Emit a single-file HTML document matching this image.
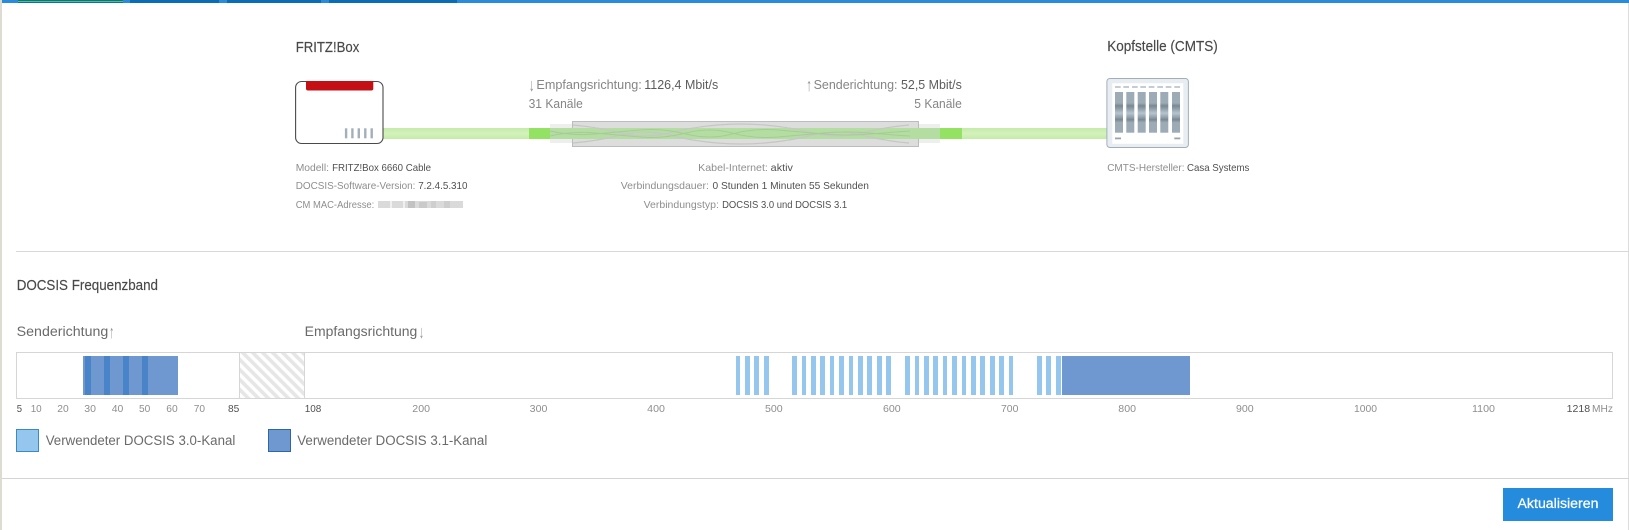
<!DOCTYPE html>
<html lang="de">
<head>
<meta charset="utf-8">
<title>DOCSIS</title>
<style>
html,body{margin:0;padding:0;background:#fff;width:1629px;height:530px;overflow:hidden}
svg{display:block;position:absolute;left:0;top:0;filter:blur(.25px)}
text{font-family:"Liberation Sans",sans-serif}
.s{font-size:10.5px;fill:#8e8e8e}
.v{font-size:10.5px;fill:#505050}
.m{font-size:13px;fill:#858585}
.n{font-size:13px;fill:#5c5c5c}
.a{font-size:18px;fill:#909090}
.t{font-size:14.5px;fill:#484848;stroke:#484848;stroke-width:.15px}
.h{font-size:13.5px;fill:#6a6a6a}
.l{font-size:10.5px;fill:#8e8e8e}
.d{font-size:10.5px;fill:#505050}
</style>
</head>
<body>
<svg width="1629" height="530" viewBox="0 0 1629 530" xmlns="http://www.w3.org/2000/svg">
<defs>
<pattern id="hatch" width="7.07" height="7.07" patternUnits="userSpaceOnUse" patternTransform="rotate(-45 240 353)">
<rect width="3.6" height="7.07" fill="#e6e6e6"/>
</pattern>
<linearGradient id="slot" x1="0" y1="0" x2="0" y2="1">
<stop offset="0" stop-color="#9dabb6"/>
<stop offset=".27" stop-color="#9dabb6"/>
<stop offset=".34" stop-color="#7a8892"/>
<stop offset=".42" stop-color="#94a2ad"/>
<stop offset=".52" stop-color="#b4c4d0"/>
<stop offset=".62" stop-color="#94a2ad"/>
<stop offset=".68" stop-color="#7a8892"/>
<stop offset=".75" stop-color="#9dabb6"/>
<stop offset="1" stop-color="#9dabb6"/>
</linearGradient>
<linearGradient id="cab" x1="0" y1="0" x2="0" y2="1">
<stop offset="0" stop-color="#c4eba8"/>
<stop offset=".5" stop-color="#d4f2bc"/>
<stop offset="1" stop-color="#c4eba8"/>
</linearGradient>
</defs>

<!-- frame -->
<rect x="0" y="0" width="2" height="530" fill="#dcdcd2"/>
<rect x="1628" y="3" width="1" height="527" fill="#dcdcdc"/>

<!-- top bar -->
<rect x="0" y="0" width="1629" height="3" fill="#2a8bdc"/>
<rect x="0" y="0" width="2" height="3" fill="#dcdcd2"/>
<rect x="18" y="0" width="105" height="3" fill="#0a6cb5"/>
<rect x="18" y="1" width="105" height="1" fill="#58c858"/>
<rect x="130" y="0" width="89" height="3" fill="#0a6cb5"/>
<rect x="227" y="0" width="94" height="3" fill="#0a6cb5"/>
<rect x="329" y="0" width="128" height="3" fill="#0a6cb5"/>

<!-- titles -->
<text class="t" x="295.7" y="52" textLength="63.6" lengthAdjust="spacingAndGlyphs">FRITZ!Box</text>
<text class="t" x="1107.2" y="51" textLength="110.6" lengthAdjust="spacingAndGlyphs">Kopfstelle (CMTS)</text>

<!-- cable -->
<rect x="383" y="128" width="724" height="11" fill="url(#cab)"/>
<rect x="529" y="128" width="21" height="11" fill="#94e264"/>
<rect x="940" y="128" width="22" height="11" fill="#94e264"/>
<rect x="550" y="124" width="390" height="19" fill="#eeeeee"/>
<rect x="572.5" y="121.5" width="346" height="25" fill="#dddddd" stroke="#bcbcbc" stroke-width="1"/>
<rect x="550" y="128" width="390" height="11" fill="#b4dda2"/>
<path d="M573 125q24 2 48 8t48 0 48-8 48 0 48 8 48 0 48-8" fill="none" stroke="#c6c6c6" stroke-width="1.2"/>
<path d="M573 143q24-2 48-8t48 0 48 8 48 0 48-8 48 0 48 8" fill="none" stroke="#c6c6c6" stroke-width="1.2"/>
<path d="M550 131q22 5 45 3t45-4 46 4 46 0 46-4 46 4 46 0 40-3" fill="none" stroke="#a6cc96" stroke-width="1"/>
<path d="M550 136q22-5 45-3t45 4 46-4 46 0 46 4 46-4 46 0 40 3" fill="none" stroke="#a6cc96" stroke-width="1"/>

<!-- router -->
<rect x="295.6" y="81.5" width="87.4" height="62" rx="6" ry="6" fill="#fff" stroke="#4a4a4a" stroke-width="1.1"/>
<path d="M306 81h67.3v7.5q0 2-2 2H308q-2 0-2-2z" fill="#c40f14"/>
<g fill="#a4afba">
<rect x="344.9" y="128.3" width="2.4" height="10"/>
<rect x="351.2" y="128.3" width="2.4" height="10"/>
<rect x="357.6" y="128.3" width="2.4" height="10"/>
<rect x="364.1" y="128.3" width="2.4" height="10"/>
<rect x="370.5" y="128.3" width="2.4" height="10"/>
</g>

<!-- CMTS -->
<rect x="1106.9" y="78.5" width="81.5" height="69" rx="3" fill="#e8edf2" stroke="#a3aebb" stroke-width="1"/>
<rect x="1112.3" y="83.3" width="71" height="60.5" fill="#fff"/>
<g fill="url(#slot)">
<rect x="1115" y="92" width="8" height="40.7"/>
<rect x="1126.3" y="92" width="8" height="40.7"/>
<rect x="1137.7" y="92" width="8" height="40.7"/>
<rect x="1149" y="92" width="8" height="40.7"/>
<rect x="1160.3" y="92" width="8" height="40.7"/>
<rect x="1172" y="92" width="8" height="40.7"/>
</g>
<g fill="#c4ccd4">
<rect x="1115" y="86" width="5.7" height="2"/>
<rect x="1123.3" y="86" width="5.7" height="2"/>
<rect x="1132" y="86" width="5.7" height="2"/>
<rect x="1140.3" y="86" width="5.7" height="2"/>
<rect x="1148.7" y="86" width="5.7" height="2"/>
<rect x="1157.3" y="86" width="5.7" height="2"/>
<rect x="1165.7" y="86" width="5.7" height="2"/>
<rect x="1174.3" y="86" width="5.7" height="2"/>
</g>
<rect x="1115" y="137.5" width="6" height="1.8" fill="#98a4ae"/>
<rect x="1174.3" y="137.5" width="6" height="1.8" fill="#98a4ae"/>

<!-- rates -->
<text class="a" x="529" y="91" textLength="5.5" lengthAdjust="spacingAndGlyphs">↓</text>
<text class="m" x="536.4" y="89" textLength="105.4" lengthAdjust="spacingAndGlyphs">Empfangsrichtung:</text>
<text class="n" x="644.3" y="89" textLength="73.9" lengthAdjust="spacingAndGlyphs">1126,4 Mbit/s</text>
<text class="m" x="528.6" y="108" textLength="54.3" lengthAdjust="spacingAndGlyphs">31 Kanäle</text>
<text class="a" x="806.4" y="91" textLength="5.5" lengthAdjust="spacingAndGlyphs">↑</text>
<text class="m" x="813.6" y="89" textLength="83.9" lengthAdjust="spacingAndGlyphs">Senderichtung:</text>
<text class="n" x="901" y="89" textLength="60.8" lengthAdjust="spacingAndGlyphs">52,5 Mbit/s</text>
<text class="m" x="914.3" y="108" textLength="47.5" lengthAdjust="spacingAndGlyphs">5 Kanäle</text>

<!-- info left -->
<text class="s" x="295.7" y="171" textLength="33.3" lengthAdjust="spacingAndGlyphs">Modell:</text>
<text class="v" x="332.1" y="171" textLength="98.9" lengthAdjust="spacingAndGlyphs">FRITZ!Box 6660 Cable</text>
<text class="s" x="295.7" y="189" textLength="119.7" lengthAdjust="spacingAndGlyphs">DOCSIS-Software-Version:</text>
<text class="v" x="418.2" y="189" textLength="49.3" lengthAdjust="spacingAndGlyphs">7.2.4.5.310</text>
<text class="s" x="295.7" y="208" textLength="78.6" lengthAdjust="spacingAndGlyphs">CM MAC-Adresse:</text>
<g>
<rect x="378" y="201" width="85" height="7" fill="#dadada"/>
<rect x="390" y="201" width="2" height="7" fill="#fff" opacity=".6"/>
<rect x="403" y="201" width="2" height="7" fill="#fff" opacity=".6"/>
<rect x="408" y="201" width="7" height="7" fill="#c2c2c2"/>
<rect x="419" y="202" width="8" height="6" fill="#cacaca"/>
<rect x="431" y="201" width="5" height="7" fill="#cecece"/>
<rect x="444" y="201" width="6" height="7" fill="#cecece"/>
</g>

<!-- info center -->
<text class="s" x="698.2" y="171" textLength="69.7" lengthAdjust="spacingAndGlyphs">Kabel-Internet:</text>
<text class="v" x="770.7" y="171" textLength="22.2" lengthAdjust="spacingAndGlyphs">aktiv</text>
<text class="s" x="620.7" y="189" textLength="88.2" lengthAdjust="spacingAndGlyphs">Verbindungsdauer:</text>
<text class="v" x="712.5" y="189" textLength="156.4" lengthAdjust="spacingAndGlyphs">0 Stunden 1 Minuten 55 Sekunden</text>
<text class="s" x="643.6" y="208" textLength="75.3" lengthAdjust="spacingAndGlyphs">Verbindungstyp:</text>
<text class="v" x="722.1" y="208" textLength="125" lengthAdjust="spacingAndGlyphs">DOCSIS 3.0 und DOCSIS 3.1</text>

<!-- info right -->
<text class="s" x="1107.2" y="171" textLength="77.3" lengthAdjust="spacingAndGlyphs">CMTS-Hersteller:</text>
<text class="v" x="1187" y="171" textLength="62.4" lengthAdjust="spacingAndGlyphs">Casa Systems</text>

<!-- divider -->
<rect x="16" y="251" width="1613" height="1" fill="#d8d8d8"/>

<!-- band section -->
<text class="t" x="16.7" y="290" textLength="141.3" lengthAdjust="spacingAndGlyphs">DOCSIS Frequenzband</text>
<text class="h" x="16.7" y="336" textLength="91.6" lengthAdjust="spacingAndGlyphs">Senderichtung</text>
<text class="a" x="109.3" y="338" textLength="5" lengthAdjust="spacingAndGlyphs">↑</text>
<text class="h" x="304.7" y="336" textLength="112.6" lengthAdjust="spacingAndGlyphs">Empfangsrichtung</text>
<text class="a" x="419" y="338" textLength="5" lengthAdjust="spacingAndGlyphs">↓</text>

<!-- chart -->
<rect x="240" y="353" width="64" height="45" fill="url(#hatch)"/>
<rect x="16.5" y="352.5" width="1596" height="46" fill="none" stroke="#d6d6d6" stroke-width="1"/>
<rect x="239" y="352" width="1" height="47" fill="#d6d6d6"/>
<rect x="304" y="352" width="1" height="47" fill="#d6d6d6"/>

<!-- upstream -->
<rect x="83" y="356" width="95" height="39" fill="#6e98cf"/>
<g fill="#4a84c8">
<rect x="85" y="356" width="6" height="39"/>
<rect x="104" y="356" width="6" height="39"/>
<rect x="123" y="356" width="6" height="39"/>
<rect x="142" y="356" width="6" height="39"/>
</g>

<!-- downstream -->
<g fill="#95c6ee">
<rect x="736" y="356" width="4" height="39"/>
<rect x="745" y="356" width="5" height="39"/>
<rect x="754" y="356" width="5" height="39"/>
<rect x="764" y="356" width="5" height="39"/>
<rect x="792" y="356" width="5" height="39"/>
<rect x="802" y="356" width="4" height="39"/>
<rect x="811" y="356" width="5" height="39"/>
<rect x="820" y="356" width="5" height="39"/>
<rect x="830" y="356" width="4" height="39"/>
<rect x="839" y="356" width="5" height="39"/>
<rect x="849" y="356" width="4" height="39"/>
<rect x="858" y="356" width="5" height="39"/>
<rect x="867" y="356" width="5" height="39"/>
<rect x="877" y="356" width="5" height="39"/>
<rect x="886" y="356" width="5" height="39"/>
<rect x="905" y="356" width="5" height="39"/>
<rect x="915" y="356" width="4" height="39"/>
<rect x="924" y="356" width="5" height="39"/>
<rect x="933" y="356" width="5" height="39"/>
<rect x="943" y="356" width="4" height="39"/>
<rect x="952" y="356" width="5" height="39"/>
<rect x="962" y="356" width="4" height="39"/>
<rect x="971" y="356" width="5" height="39"/>
<rect x="980" y="356" width="5" height="39"/>
<rect x="990" y="356" width="5" height="39"/>
<rect x="999" y="356" width="5" height="39"/>
<rect x="1009" y="356" width="4" height="39"/>
<rect x="1037" y="356" width="5" height="39"/>
<rect x="1046" y="356" width="5" height="39"/>
<rect x="1056" y="356" width="5" height="39"/>
</g>
<rect x="1062" y="356" width="128" height="39" fill="#6e98cf"/>

<!-- axis -->
<text class="d" x="16.7" y="412" textLength="5.3" lengthAdjust="spacingAndGlyphs">5</text>
<text class="l" x="30.7" y="412" textLength="11" lengthAdjust="spacingAndGlyphs">10</text>
<text class="l" x="57.3" y="412" textLength="11.4" lengthAdjust="spacingAndGlyphs">20</text>
<text class="l" x="84.3" y="412" textLength="11.7" lengthAdjust="spacingAndGlyphs">30</text>
<text class="l" x="111.7" y="412" textLength="11.6" lengthAdjust="spacingAndGlyphs">40</text>
<text class="l" x="139" y="412" textLength="11.3" lengthAdjust="spacingAndGlyphs">50</text>
<text class="l" x="166.3" y="412" textLength="11.4" lengthAdjust="spacingAndGlyphs">60</text>
<text class="l" x="193.7" y="412" textLength="11.3" lengthAdjust="spacingAndGlyphs">70</text>
<text class="d" x="228" y="412" textLength="11.3" lengthAdjust="spacingAndGlyphs">85</text>
<text class="d" x="304.7" y="412" textLength="16.6" lengthAdjust="spacingAndGlyphs">108</text>
<text class="l" x="412.3" y="412" textLength="17.7" lengthAdjust="spacingAndGlyphs">200</text>
<text class="l" x="529.7" y="412" textLength="17.7" lengthAdjust="spacingAndGlyphs">300</text>
<text class="l" x="647.2" y="412" textLength="17.7" lengthAdjust="spacingAndGlyphs">400</text>
<text class="l" x="765" y="412" textLength="17.7" lengthAdjust="spacingAndGlyphs">500</text>
<text class="l" x="883" y="412" textLength="17.7" lengthAdjust="spacingAndGlyphs">600</text>
<text class="l" x="1001" y="412" textLength="17.4" lengthAdjust="spacingAndGlyphs">700</text>
<text class="l" x="1118.3" y="412" textLength="17.7" lengthAdjust="spacingAndGlyphs">800</text>
<text class="l" x="1236" y="412" textLength="17.7" lengthAdjust="spacingAndGlyphs">900</text>
<text class="l" x="1354" y="412" textLength="23" lengthAdjust="spacingAndGlyphs">1000</text>
<text class="l" x="1472" y="412" textLength="23" lengthAdjust="spacingAndGlyphs">1100</text>
<text class="d" x="1566.7" y="412" textLength="23.5" lengthAdjust="spacingAndGlyphs">1218</text>
<text class="l" x="1592" y="412" textLength="21" lengthAdjust="spacingAndGlyphs">MHz</text>

<!-- legend -->
<rect x="16.5" y="429.5" width="22" height="22" fill="#95c6ee" stroke="#3a8ac4" stroke-width="1"/>
<text class="h" x="45.7" y="445" textLength="189.6" lengthAdjust="spacingAndGlyphs">Verwendeter DOCSIS 3.0-Kanal</text>
<rect x="268.5" y="429.5" width="22" height="22" fill="#6e98cf" stroke="#2a68a8" stroke-width="1"/>
<text class="h" x="297.3" y="445" textLength="190" lengthAdjust="spacingAndGlyphs">Verwendeter DOCSIS 3.1-Kanal</text>

<!-- footer -->
<rect x="2" y="478" width="1627" height="1" fill="#d4d4d4"/>
<rect x="1503" y="488" width="110" height="33" fill="#258bdc"/>
<text x="1517.5" y="508" font-size="13.5" fill="#fff" stroke="#fff" stroke-width=".25" textLength="81" lengthAdjust="spacingAndGlyphs">Aktualisieren</text>
</svg>
</body>
</html>
